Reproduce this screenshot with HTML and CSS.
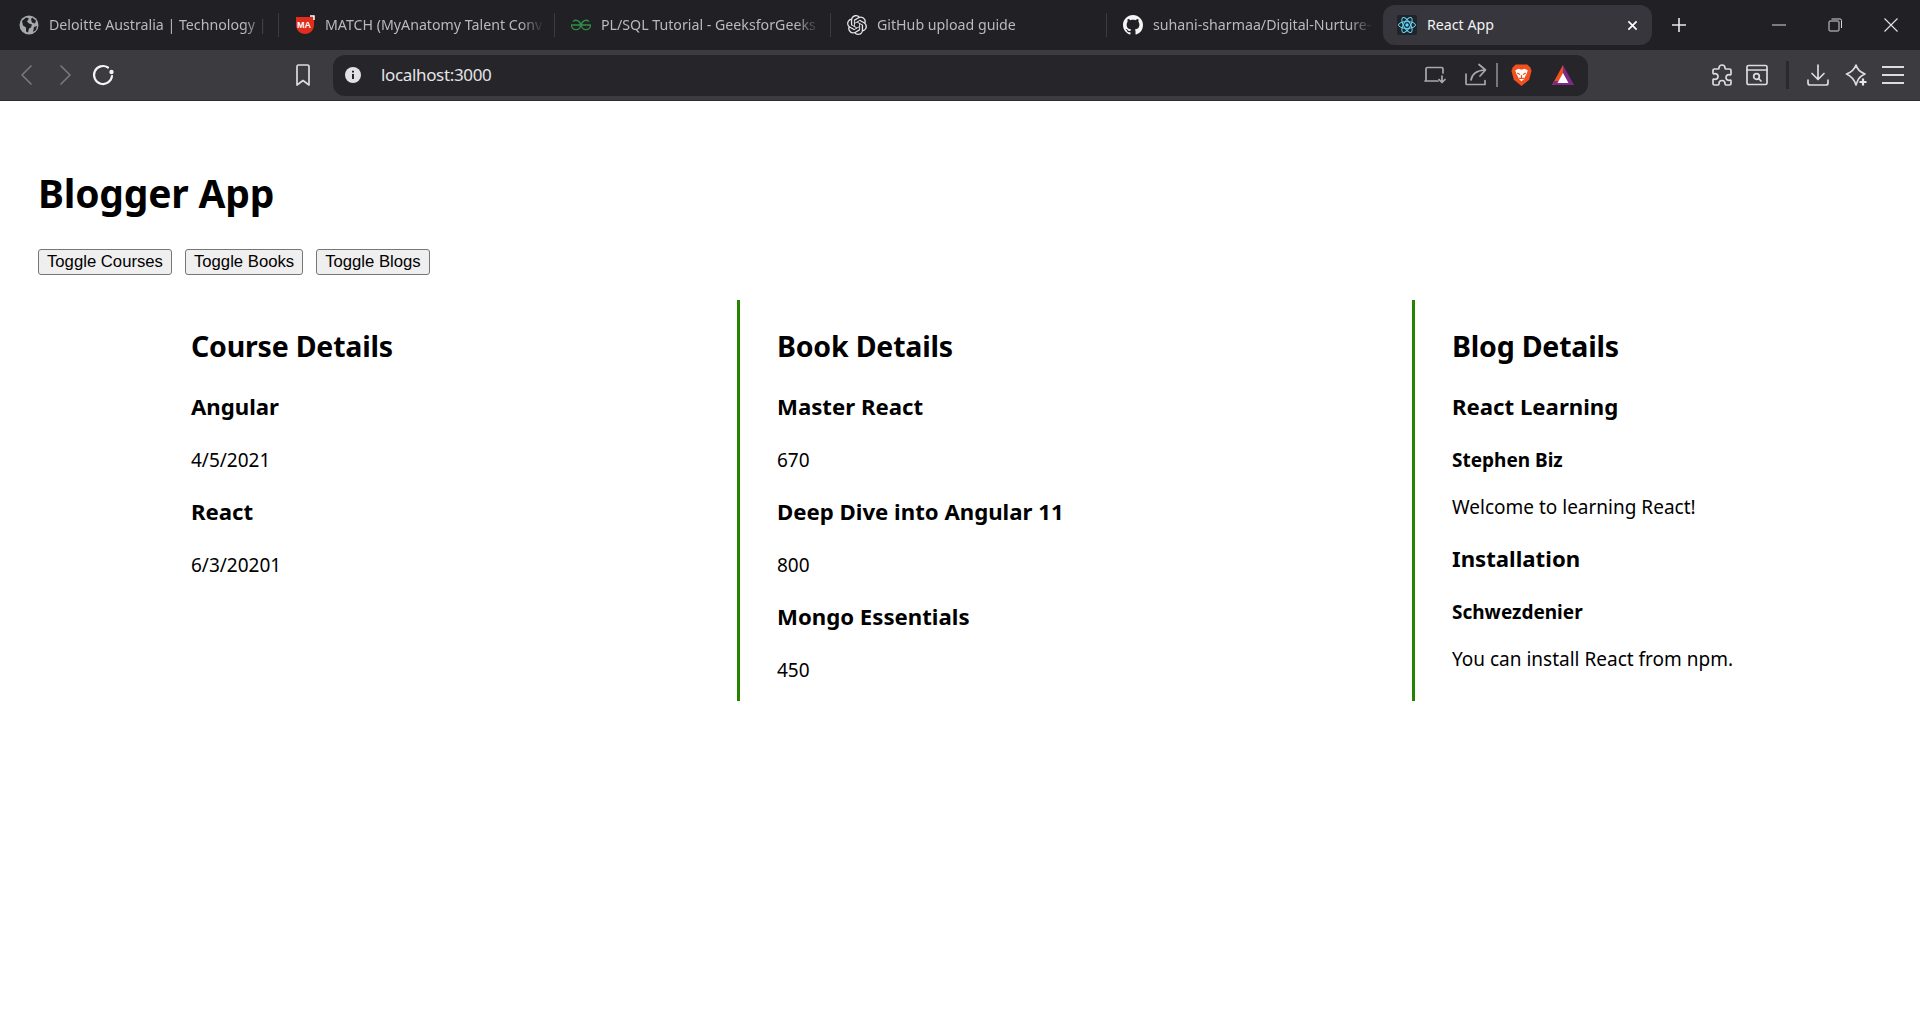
FILE: index.html
```html
<!DOCTYPE html>
<html lang="en">
<head>
    <meta charset="UTF-8">
    <title>React App</title>
    <link rel="stylesheet" href="styles.css">
</head>
<body>
    <div class="tab-strip">
        <div class="tab">
            <svg class="favicon" viewBox="0 0 20 20"><circle cx="10" cy="10" r="9.5" fill="#a6a8ac"/><path d="M3 6l4-3.5 3 1-2 3 2 2 3 1-1 3-2 1-1 4-2-1v-4l-3-2zM13 2.5l4 3-1 3-3-1-1-3zM15 12l3-1-1 4-3 2z" fill="#202025"/></svg>
            <span class="tab-title">Deloitte Australia | Technology | D</span>
            <i class="tab-sep"></i>
        </div>
        <div class="tab">
            <svg class="favicon" viewBox="0 0 20 20"><path d="M1 2h18v8c0 5-4 9-9 9s-9-4-9-9z" fill="#e02d1c"/><path d="M15 1h4v4" fill="none" stroke="#fff" stroke-width="1.5"/><text x="9" y="13" class="match-mark" text-anchor="middle">MA</text></svg>
            <span class="tab-title">MATCH (MyAnatomy Talent Conv</span>
            <i class="tab-sep"></i>
        </div>
        <div class="tab">
            <svg class="favicon" viewBox="0 0 20 20"><path d="M2 6.5A4.6 4.6 0 0 1 9.6 10 4.6 4.6 0 0 1 .4 10h9.2M18 6.5A4.6 4.6 0 0 0 10.4 10 4.6 4.6 0 0 0 19.600 10h-9.2" fill="none" stroke="#2f8d46" stroke-width="1.4"/></svg>
            <span class="tab-title">PL/SQL Tutorial - GeeksforGeeks</span>
            <i class="tab-sep"></i>
        </div>
        <div class="tab">
            <svg class="favicon" viewBox="0 0 24 24"><path fill="#e4e4e6" d="M22.2819 9.8211a5.9847 5.9847 0 0 0-.5157-4.9108 6.0462 6.0462 0 0 0-6.5098-2.9A6.0651 6.0651 0 0 0 4.9807 4.1818a5.9847 5.9847 0 0 0-3.9977 2.9 6.0462 6.0462 0 0 0 .7427 7.0966 5.98 5.98 0 0 0 .511 4.9107 6.051 6.051 0 0 0 6.5146 2.9001A5.9847 5.9847 0 0 0 13.2599 24a6.0557 6.0557 0 0 0 5.7718-4.2058 5.9894 5.9894 0 0 0 3.9977-2.9001 6.0557 6.0557 0 0 0-.7475-7.0729zm-9.022 12.6081a4.4755 4.4755 0 0 1-2.8764-1.0408l.1419-.0804 4.7783-2.7582a.7948.7948 0 0 0 .3927-.6813v-6.7369l2.02 1.1686a.071.071 0 0 1 .038.052v5.5826a4.504 4.504 0 0 1-4.4945 4.4944zm-9.6607-4.1254a4.4708 4.4708 0 0 1-.5346-3.0137l.142.0852 4.783 2.7582a.7712.7712 0 0 0 .7806 0l5.8428-3.3685v2.3324a.0804.0804 0 0 1-.0332.0615L9.74 19.9502a4.4992 4.4992 0 0 1-6.1408-1.6464zM2.3408 7.8956a4.485 4.485 0 0 1 2.3655-1.9728V11.6a.7664.7664 0 0 0 .3879.6765l5.8144 3.3543-2.0201 1.1685a.0757.0757 0 0 1-.071 0l-4.8303-2.7865A4.504 4.504 0 0 1 2.3408 7.872zm16.5963 3.8558L13.1038 8.364 15.1192 7.2a.0757.0757 0 0 1 .071 0l4.8303 2.7913a4.4944 4.4944 0 0 1-.6765 8.1042v-5.6772a.79.79 0 0 0-.407-.667zm2.0107-3.0231l-.142-.0852-4.7735-2.7818a.7759.7759 0 0 0-.7854 0L9.409 9.2297V6.8974a.0662.0662 0 0 1 .0284-.0615l4.8303-2.7866a4.4992 4.4992 0 0 1 6.6802 4.66zM8.3065 12.863l-2.02-1.1638a.0804.0804 0 0 1-.038-.0567V6.0742a4.4992 4.4992 0 0 1 7.3757-3.4537l-.142.0805L8.704 5.459a.7948.7948 0 0 0-.3927.6813zm1.0976-2.3654l2.602-1.4998 2.6069 1.4998v2.9994l-2.5974 1.4997-2.6067-1.4997Z"/></svg>
            <span class="tab-title">GitHub upload guide</span>
            <i class="tab-sep"></i>
        </div>
        <div class="tab">
            <svg class="favicon" viewBox="0 0 16 16"><path fill="#f4f4f5" d="M8 0C3.58 0 0 3.58 0 8c0 3.54 2.29 6.53 5.47 7.59.4.07.55-.17.55-.38 0-.19-.01-.82-.01-1.49-2.01.37-2.53-.49-2.69-.94-.09-.23-.48-.94-.82-1.13-.28-.15-.68-.52-.01-.53.63-.01 1.08.58 1.23.82.72 1.21 1.87.87 2.33.66.07-.52.28-.87.51-1.07-1.78-.2-3.64-.89-3.64-3.95 0-.87.31-1.59.82-2.15-.08-.2-.36-1.02.08-2.12 0 0 .67-.21 2.2.82.64-.18 1.32-.27 2-.27.68 0 1.36.09 2 .27 1.53-1.04 2.2-.82 2.2-.82.44 1.1.16 1.92.08 2.12.51.56.82 1.27.82 2.15 0 3.07-1.87 3.75-3.65 3.95.29.25.54.73.54 1.48 0 1.07-.01 1.93-.01 2.2 0 .21.15.46.55.38A8.013 8.013 0 0016 8c0-4.42-3.58-8-8-8z"/></svg>
            <span class="tab-title">suhani-sharmaa/Digital-Nurture-</span>
        </div>
        <div class="tab tab-active">
            <svg class="favicon" viewBox="0 0 20 20"><rect width="20" height="20" rx="2" fill="#20232a"/><g fill="none" stroke="#61dafb" stroke-width="1"><ellipse cx="10" cy="10" rx="8.5" ry="3.4"/><ellipse cx="10" cy="10" rx="8.5" ry="3.4" transform="rotate(60 10 10)"/><ellipse cx="10" cy="10" rx="8.5" ry="3.4" transform="rotate(120 10 10)"/></g><circle cx="10" cy="10" r="1.7" fill="#61dafb"/></svg>
            <span class="tab-title">React App</span>
            <svg class="tab-close" viewBox="0 0 12 12"><path d="M1.5 1.5l9 9M10.5 1.5l-9 9" stroke="#fff" stroke-width="1.8"/></svg>
        </div>
        <svg class="new-tab" viewBox="0 0 14 14"><path d="M7 0v14M0 7h14" stroke="#e8e8ea" stroke-width="1.6"/></svg>
        <div class="window-controls">
            <svg class="win-btn" viewBox="0 0 14 14"><path d="M0 7h14" stroke="#d8d8da"/></svg>
            <svg class="win-btn" viewBox="0 0 14 14" fill="none" stroke="#d8d8da"><rect x="1" y="3" width="10" height="10" rx="1"/><path d="M3.5 1H12a1.5 1.5 0 0 1 1.5 1.5V10"/></svg>
            <svg class="win-btn" viewBox="0 0 14 14"><path d="M.5.5l13 13M13.500.5l-13 13" stroke="#e4e4e6" stroke-width="1.1"/></svg>
        </div>
    </div>

    <div class="toolbar">
        <svg class="tool-icon" viewBox="0 0 24 24"><path d="M16 3L7 12l9 9" class="line line-dim"/></svg>
        <svg class="tool-icon" viewBox="0 0 24 24"><path d="M8 3l9 9-9 9" class="line line-dim"/></svg>
        <svg class="tool-icon" viewBox="0 0 24 24"><path d="M17 4.5A9 9 0 1 0 21 13" class="line line-white"/><circle cx="20.5" cy="9" r="2.2" fill="#f4f4f5"/></svg>
        <svg class="tool-icon bookmark" viewBox="0 0 24 24"><path d="M6 3.5A1.500 1.500 0 0 1 7.500 2h9A1.500 1.500 0 0 1 18 3.500V22l-6-4.500L6 22z" class="line"/></svg>

        <div class="address-bar">
            <svg class="info-icon" viewBox="0 0 18 18"><circle cx="9" cy="9" r="8" fill="#e2e2e4"/><path d="M9 8v5M9 4.8v1.6" stroke="#25252a" stroke-width="2"/></svg>
            <span class="address-text">localhost:3000</span>
            <div class="address-actions">
                <svg class="tool-icon" viewBox="0 0 24 24"><path d="M3 14V6a1.5 1.5 0 0 1 1.5-1.5h14A1.500 1.500 0 0 1 20 6v4M2 18h13M3 14v4" class="line line-thin"/><path d="M19 13v6m-3-2.5l3 3 3-3" class="line line-thin"/></svg>
                <svg class="tool-icon share" viewBox="0 0 24 24"><path d="M2 11v9.5a1 1 0 0 0 1 1h18v-4M7 17c1-6 5-9.500 14-10M15 1.500L21.500 7 16 13" class="line line-thin"/></svg>
                <i class="address-sep"></i>
                <svg class="brand-icon brave" viewBox="0 0 24 24"><path d="M6 1h12l3 3 1.5 3.5L20 17l-8 6.500L4 17 1.5 7.500 3 4z" fill="#f1501f"/><path d="M5.5 7L9 5.500l3 1 3-1L18.500 7l-1 3.500-2 3.500-1 2.500-2.500 2-2.500-2-1-2.500-2-3.500z" fill="#fff"/><path d="M7.5 10l3 1.500M16.500 10l-3 1.500M12 12v3M9.500 15.500h5" stroke="#f1501f" stroke-width="1.2" fill="none"/></svg>
                <svg class="brand-icon" viewBox="0 0 24 24"><path d="M12 2L1 22h11z" fill="#f0501e"/><path d="M12 2l11 20H12z" fill="#7d2a86"/><path d="M1 22h22l-2.5-4h-17z" fill="#7d2a86"/><path d="M12 10l5.500 10h-11z" fill="#fff"/></svg>
            </div>
        </div>

        <div class="tool-group tool-group-first">
            <svg class="tool-icon" viewBox="0 0 24 24"><path d="M9 5a3 3 0 1 1 6 0c0 .6 0 1 1 1h3.500A1.500 1.500 0 0 1 21 7.500V11c0 1-1 1-1.500.8a2.800 2.800 0 1 0 0 5.400c.5-.2 1.500-.2 1.500.8v2.500a1.500 1.500 0 0 1-1.500 1.500H16c-1 0-1-1-1-1.500a3 3 0 1 0-6 0c0 .5 0 1.500-1 1.500H4.500A1.500 1.500 0 0 1 3 20.500V17c0-1 1-1 1.500-.8a2.800 2.800 0 1 0 0-5.400C4 11 3 11 3 10V7.500A1.500 1.500 0 0 1 4.500 6H8c1 0 1-.4 1-1z" class="line"/></svg>
            <svg class="tool-icon" viewBox="0 0 24 24"><rect x="2" y="2.5" width="20" height="19" rx="1.5" class="line"/><path d="M2 7h20" class="line"/><circle cx="11.5" cy="13.5" r="2.8" class="line"/><path d="M13.5 15.5l2.5 2.5" class="line"/></svg>
        </div>
        <i class="tool-sep"></i>
        <div class="tool-group tool-group-wide">
            <svg class="tool-icon" viewBox="0 0 24 24"><path d="M12 2v14M6 10.500l6 6 6-6M2 17v3a2 2 0 0 0 2 2h16a2 2 0 0 0 2-2v-3" class="line"/></svg>
            <svg class="tool-icon" viewBox="0 0 24 24"><path d="M12 2c1 4 4 7 9 9-4 2-6 3.500-7 6-1 2.500-1.300 3.500-2 5-1.500-5-4-8.500-9.500-11C8 9 10.500 6.500 12 2z" class="line"/><path d="M19 15.500v7M15.500 19h7" stroke="#e8e8ea" stroke-width="2.2"/></svg>
            <svg class="tool-icon" viewBox="0 0 24 24"><path d="M1 4h22M1 12h22M1 20h22" stroke="#dcdcde" stroke-width="2"/></svg>
        </div>
    </div>

    <main class="app">
        <h1 class="app-title">Blogger App</h1>
        <div class="actions">
            <button class="toggle">Toggle Courses</button>
            <button class="toggle">Toggle Books</button>
            <button class="toggle">Toggle Blogs</button>
        </div>
        <div class="details">
            <section class="col col-courses">
                <h2>Course Details</h2>
                <h3>Angular</h3>
                <p>4/5/2021</p>
                <h3>React</h3>
                <p>6/3/20201</p>
            </section>
            <section class="col col-books">
                <h2>Book Details</h2>
                <h3>Master React</h3>
                <p>670</p>
                <h3>Deep Dive into Angular 11</h3>
                <p>800</p>
                <h3>Mongo Essentials</h3>
                <p>450</p>
            </section>
            <section class="col col-blogs">
                <h2>Blog Details</h2>
                <h3>React Learning</h3>
                <h4>Stephen Biz</h4>
                <p>Welcome to learning React!</p>
                <h3>Installation</h3>
                <h4>Schwezdenier</h4>
                <p>You can install React from npm.</p>
            </section>
        </div>
    </main>
</body>
</html>
```

FILE: styles.css
```css
* {
    box-sizing: border-box;
}
body {
    margin: 0;
    background-color: #fff;
    color: #000;
    font-family: "Noto Sans", "Open Sans", sans-serif;
}

/* browser chrome */
.tab-strip {
    display: flex;
    align-items: center;
    height: 50px;
    padding-left: 3px;
    background-color: #202025;
}
.tab {
    display: flex;
    align-items: center;
    width: 276px;
    height: 40px;
    padding-left: 16px;
    color: #b9babd;
    font-size: 14.2px;
}
.favicon {
    flex: none;
    width: 20px;
    height: 20px;
    margin-right: 10px;
}
.match-mark {
    fill: #fff;
    font-family: "Liberation Sans", sans-serif;
    font-size: 9px;
    font-weight: 700;
}
.tab-title {
    flex: 1;
    overflow: hidden;
    padding-bottom: 2px;
    white-space: nowrap;
    -webkit-mask-image: linear-gradient(to left, transparent 0, #000 24px);
    mask-image: linear-gradient(to left, transparent 0, #000 24px);
    margin-right: 10px;
}
.tab-sep {
    flex: none;
    width: 1px;
    height: 24px;
    background-color: #3c3c42;
}
.tab-active {
    width: 269px;
    border-radius: 12px;
    padding-left: 14px;
    padding-right: 14px;
    background-color: #36363c;
    color: #f2f2f3;
}
.tab-active .tab-title {
    -webkit-mask-image: none;
    mask-image: none;
}
.tab-close {
    flex: none;
    width: 11px;
    height: 11px;
}
.new-tab {
    width: 14px;
    height: 14px;
    margin-left: 20px;
}
.window-controls {
    display: flex;
    align-items: center;
    gap: 42px;
    margin-left: auto;
    padding-right: 22px;
}
.win-btn {
    width: 14px;
    height: 14px;
}

.toolbar {
    display: flex;
    align-items: center;
    gap: 14px;
    height: 51px;
    padding-left: 15px;
    background-color: #3b3b40;
    border-bottom: 1px solid #2c2c30;
}
.tool-icon {
    flex: none;
    width: 24px;
    height: 24px;
}
.line {
    fill: none;
    stroke: #dcdcde;
    stroke-width: 1.7;
    stroke-linecap: round;
    stroke-linejoin: round;
}
.line-dim {
    stroke: #77787c;
}
.line-white {
    stroke: #f4f4f5;
    stroke-width: 2.2;
}
.line-thin {
    stroke: #a8a9ac;
}
.bookmark {
    margin-left: 162px;
}
.address-bar {
    display: flex;
    align-items: center;
    flex: none;
    width: 1255px;
    height: 41px;
    margin-left: 4px;
    padding: 0 13px 0 11px;
    border-radius: 12px;
    background-color: #25252a;
}
.info-icon {
    flex: none;
    width: 18px;
    height: 18px;
}
.address-text {
    margin-left: 19px;
    padding-bottom: 2px;
    color: #e4e4e6;
    font-size: 17px;
    letter-spacing: -0.35px;
}
.address-actions {
    display: flex;
    align-items: center;
    margin-left: auto;
}
.share {
    margin-left: 17px;
}
.address-sep {
    width: 2px;
    height: 24px;
    margin: 0 12.5px 0 8px;
    background-color: #77787c;
}
.brand-icon {
    flex: none;
    width: 24px;
    height: 24px;
}
.brave {
    margin-right: 18px;
    width: 23px;
    height: 26px;
}
.tool-group {
    display: flex;
    gap: 11px;
}
.tool-group-first {
    margin-left: 108px;
}
.tool-group-wide {
    gap: 13.5px;
}
.tool-sep {
    width: 3px;
    height: 28px;
    margin: 0 3px;
    background-color: #2a2a2e;
}

/* the page */
.app {
    padding: 66px 0 0 38px;
}
.app-title {
    margin: 0;
    font-size: 39px;
    line-height: 52px;
    font-weight: 700;
    letter-spacing: -0.2px;
}
.actions {
    display: flex;
    gap: 13px;
    margin-top: 30px;
}
.toggle {
    height: 26px;
    padding: 0 8px;
    border: 1px solid #767676;
    border-radius: 3px;
    background-color: #efefef;
    color: #000;
    font-family: "Liberation Sans", Arial, sans-serif;
    font-size: 16.7px;
}
.details {
    display: grid;
    grid-template-columns: 699px 675px 1fr;
    margin-top: 25px;
    height: 401px;
}
.col {
    padding-top: 26px;
    padding-left: 37px;
    border-left: 3px solid #268300;
}
.col-courses {
    padding-left: 153px;
    border-left: none;
}
.col h2 {
    margin: 0 0 26px;
    font-size: 28.5px;
    line-height: 40px;
    letter-spacing: -0.2px;
}
.col h3 {
    margin: 0 0 24px;
    font-size: 22.2px;
    line-height: 30px;
}
.col h4 {
    margin: 0 0 19px;
    font-size: 19px;
    line-height: 28px;
}
.col p {
    margin: 0 0 23px;
    font-size: 19px;
    line-height: 28px;
}
```
